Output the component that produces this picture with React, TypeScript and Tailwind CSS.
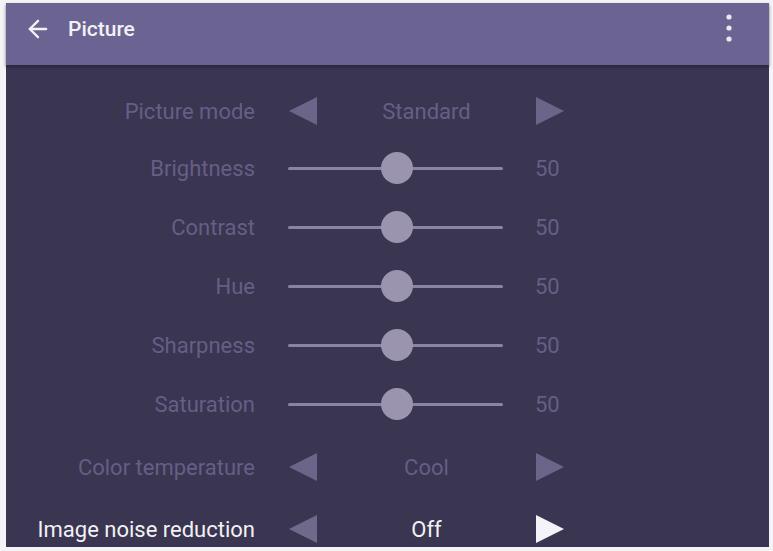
import { ArrowLeft } from "lucide-react";

const dim = "text-[#655f86]";

function Triangle({ dir, color }: { dir: "left" | "right"; color: string }) {
  return (
    <svg width="30" height="30" viewBox="0 0 30 30" className="shrink-0">
      <polygon points={dir === "left" ? "1,15 29,1 29,29" : "1,1 29,15 1,29"} fill={color} />
    </svg>
  );
}

function Label({ text, active }: { text: string; active?: boolean }) {
  return (
    <div className={`w-[249px] shrink-0 text-right ${active ? "text-[#f2f1f6]" : dim}`}>{text}</div>
  );
}

function SelectRow({
  label,
  value,
  active,
  className
}: {
  label: string;
  value: string;
  active?: boolean;
  className: string;
}) {
  return (
    <div className={`flex h-10 items-center ${className}`}>
      <Label text={label} active={active} />
      <div className="ml-[33px] flex items-center">
        <Triangle dir="left" color={active ? "#6f6a8c" : "#6b6589"} />
        <div className={`w-[217px] text-center ${active ? "text-[#f2f1f6]" : dim}`}>{value}</div>
        <Triangle dir="right" color={active ? "#f4f3f8" : "#6b6589"} />
      </div>
    </div>
  );
}

function SliderRow({ label, value, className }: { label: string; value: number; className: string }) {
  return (
    <div className={`flex h-10 items-center ${className}`}>
      <Label text={label} />
      <div className="relative ml-[33px] h-10 w-[215px]">
        <div className="absolute left-0 right-0 top-[19px] h-[3px] rounded-full bg-[#8a84a2]" />
        <div
          className="absolute top-[4px] h-8 w-8 rounded-full bg-[#9a94ae]"
          style={{ left: `${(value / 100) * 215 - 16 + 1}px` }}
        />
      </div>
      <div className={`ml-[32px] ${dim}`}>{value}</div>
    </div>
  );
}

export default function App() {
  return (
    <div
      className="h-[551px] w-[773px] bg-[#f4f4f6] pb-[4px] pl-[6px] pr-[4px] pt-[3px]"
      style={{ fontFamily: "Roboto, 'Noto Sans', sans-serif" }}
    >
      <div className="flex h-full flex-col bg-[#3a3550]">
        <div className="flex h-[62px] shrink-0 items-start bg-[#6b6391] shadow-[0_2px_3px_rgba(30,25,45,0.6)]">
          <ArrowLeft className="ml-[18px] mt-[12px] h-[28px] w-[28px] text-[#f2f1f6]" strokeWidth={2} />
          <span className="ml-[16px] mt-[12px] text-[21px] font-medium leading-[28px] text-[#f2f1f6]">
            Picture
          </span>
          <svg width="8" height="32" viewBox="0 0 8 32" className="ml-auto mr-[36px] mt-[11px]">
            <circle cx="4" cy="3" r="2.6" fill="#ebe8f4" />
            <circle cx="4" cy="14" r="2.6" fill="#ebe8f4" />
            <circle cx="4" cy="25" r="2.6" fill="#ebe8f4" />
          </svg>
        </div>
        <div className="flex flex-col text-[22px]">
          <SelectRow label="Picture mode" value="Standard" className="mt-[26px]" />
          <SliderRow label="Brightness" value={50} className="mt-[17px]" />
          <SliderRow label="Contrast" value={50} className="mt-[19px]" />
          <SliderRow label="Hue" value={50} className="mt-[19px]" />
          <SliderRow label="Sharpness" value={50} className="mt-[19px]" />
          <SliderRow label="Saturation" value={50} className="mt-[19px]" />
          <SelectRow label="Color temperature" value="Cool" className="mt-[23px]" />
          <SelectRow label="Image noise reduction" value="Off" active className="mt-[22px]" />
        </div>
      </div>
    </div>
  );
}
